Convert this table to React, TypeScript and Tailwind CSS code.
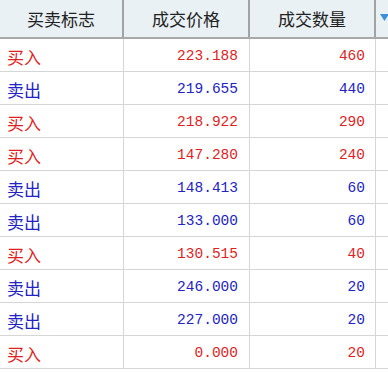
import React from "react";

const rows: [string, string, string][] = [
  ["买入", "223.188", "460"],
  ["卖出", "219.655", "440"],
  ["买入", "218.922", "290"],
  ["买入", "147.280", "240"],
  ["卖出", "148.413", "60"],
  ["卖出", "133.000", "60"],
  ["买入", "130.515", "40"],
  ["卖出", "246.000", "20"],
  ["卖出", "227.000", "20"],
  ["买入", "0.000", "20"],
];

export default function App() {
  return (
    <div className="w-[388px] h-[372px] overflow-hidden bg-white">
      <div className="grid grid-cols-[124px_126px_126px_12px] h-[39px] bg-[#e9f1f5] border-b-2 border-[#a9a9a9] font-['Noto_Sans_CJK_SC','Noto_Sans',sans-serif] text-[17px] text-[#222]">
        <div className="flex items-center justify-center pt-[1px] border-r-2 border-[#a3a3a3]">买卖标志</div>
        <div className="flex items-center justify-center pt-[1px] border-r-2 border-[#a3a3a3]">成交价格</div>
        <div className="flex items-center justify-center pt-[1px] border-r-2 border-[#a3a3a3]">成交数量</div>
        <div className="relative">
          <svg className="absolute left-[4px] top-[14px]" width="9" height="7" viewBox="0 0 9 7">
            <polygon points="0,0 9,0 4.5,7" fill="#3f8fd6" />
          </svg>
        </div>
      </div>
      {rows.map((r, i) => (
        <div
          key={i}
          className={
            r[0] === "买入"
              ? "grid grid-cols-[124px_126px_126px_12px] h-[33px] border-b border-[#d6d6d6] text-[#e01f1f]"
              : "grid grid-cols-[124px_126px_126px_12px] h-[33px] border-b border-[#d6d6d6] text-[#2323c4]"
          }
        >
          <div className="flex items-center pl-[7px] pt-[3px] border-r border-[#d6d6d6] text-[17px] font-['Noto_Sans_CJK_SC','Noto_Sans',sans-serif]">{r[0]}</div>
          <div className="flex items-center justify-end pr-[11px] pt-[3px] border-r border-[#d6d6d6] text-[14.5px] font-['Liberation_Mono','DejaVu_Sans_Mono',monospace]">{r[1]}</div>
          <div className="flex items-center justify-end pr-[10px] pt-[3px] border-r border-[#d6d6d6] text-[14.5px] font-['Liberation_Mono','DejaVu_Sans_Mono',monospace]">{r[2]}</div>
          <div />
        </div>
      ))}
    </div>
  );
}
